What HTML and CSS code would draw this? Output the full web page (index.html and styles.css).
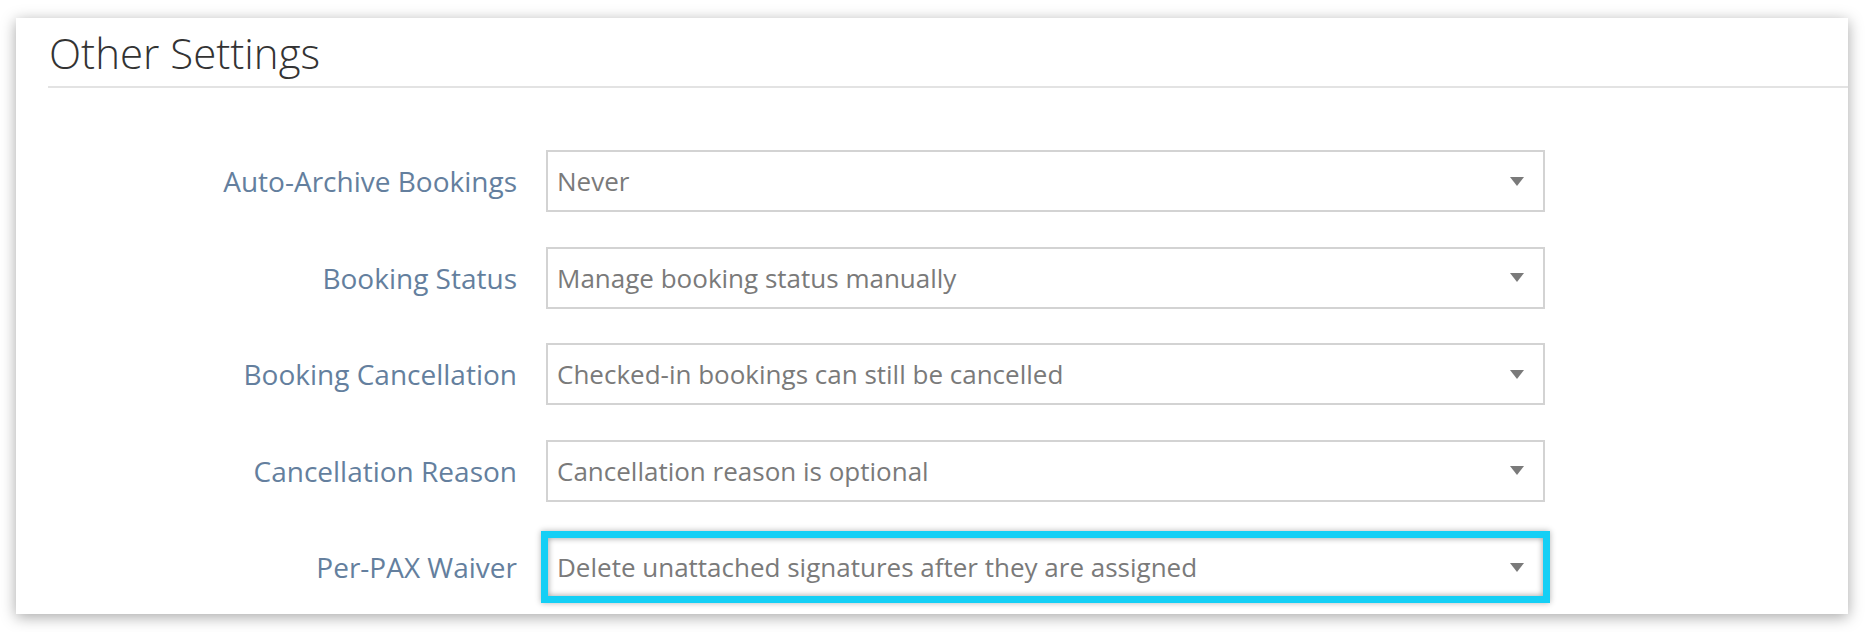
FILE: index.html
```html
<!DOCTYPE html>
<html lang="en">
<head>
    <meta charset="UTF-8">
    <meta name="viewport" content="width=device-width, initial-scale=1.0">
    <title>Other Settings</title>
    <link rel="stylesheet" href="styles.css">
</head>
<body>
    <!-- Panel -->
    <div class="panel">
        <div class="panel-header">
            <h2>Other Settings</h2>
        </div>

        <!-- Settings form -->
        <div class="settings-form">
            <label class="setting-label">Auto-Archive Bookings</label>
            <div class="select-box">
                <span>Never</span>
                <span class="caret"></span>
            </div>

            <label class="setting-label">Booking Status</label>
            <div class="select-box">
                <span>Manage booking status manually</span>
                <span class="caret"></span>
            </div>

            <label class="setting-label">Booking Cancellation</label>
            <div class="select-box">
                <span>Checked-in bookings can still be cancelled</span>
                <span class="caret"></span>
            </div>

            <label class="setting-label">Cancellation Reason</label>
            <div class="select-box">
                <span>Cancellation reason is optional</span>
                <span class="caret"></span>
            </div>

            <label class="setting-label">Per-PAX Waiver</label>
            <div class="select-box highlighted">
                <span>Delete unattached signatures after they are assigned</span>
                <span class="caret"></span>
            </div>
        </div>
    </div>
</body>
</html>
```

FILE: styles.css
```css
body {
    margin: 0;
    padding: 0 0 18px 0;
    min-height: 632px;
    box-sizing: border-box;
    background-color: #ffffff;
    font-family: "Open Sans", "Noto Sans", sans-serif;
}
.panel {
    margin: 18px 18px 0 16px;
    height: 596px;
    background-color: #ffffff;
    box-shadow: 0 3px 14px rgba(0, 0, 0, 0.35);
    overflow: hidden;
}
.panel-header {
    box-sizing: border-box;
    height: 70px;
    margin-left: 32px;
    padding-top: 14px;
    border-bottom: 2px solid #e3e3e3;
}
.panel-header h2 {
    margin: 0;
    padding-left: 1px;
    font-size: 42px;
    font-weight: 300;
    line-height: 42px;
    color: #333333;
}
.settings-form {
    display: grid;
    grid-template-columns: 501px 999px;
    grid-auto-rows: 62px;
    column-gap: 29px;
    row-gap: 34.5px;
    margin-top: 62px;
}
.setting-label {
    align-self: center;
    text-align: right;
    font-size: 28px;
    color: #647f9e;
}
.select-box {
    box-sizing: border-box;
    display: flex;
    align-items: center;
    justify-content: space-between;
    padding: 0 19px 0 9px;
    border: 2px solid #d3d3d3;
    background-color: #ffffff;
    font-size: 26px;
    color: #7a7a7a;
}
.caret {
    width: 0;
    height: 0;
    border-left: 7.5px solid transparent;
    border-right: 7.5px solid transparent;
    border-top: 9px solid #7a7a7a;
}
.select-box.highlighted {
    border-color: #14cff5;
    box-shadow: 0 0 0 5px #14cff5, 0 0 6px 5px rgba(0, 0, 0, 0.3), inset 0 0 6px rgba(0, 0, 0, 0.4);
}
```
